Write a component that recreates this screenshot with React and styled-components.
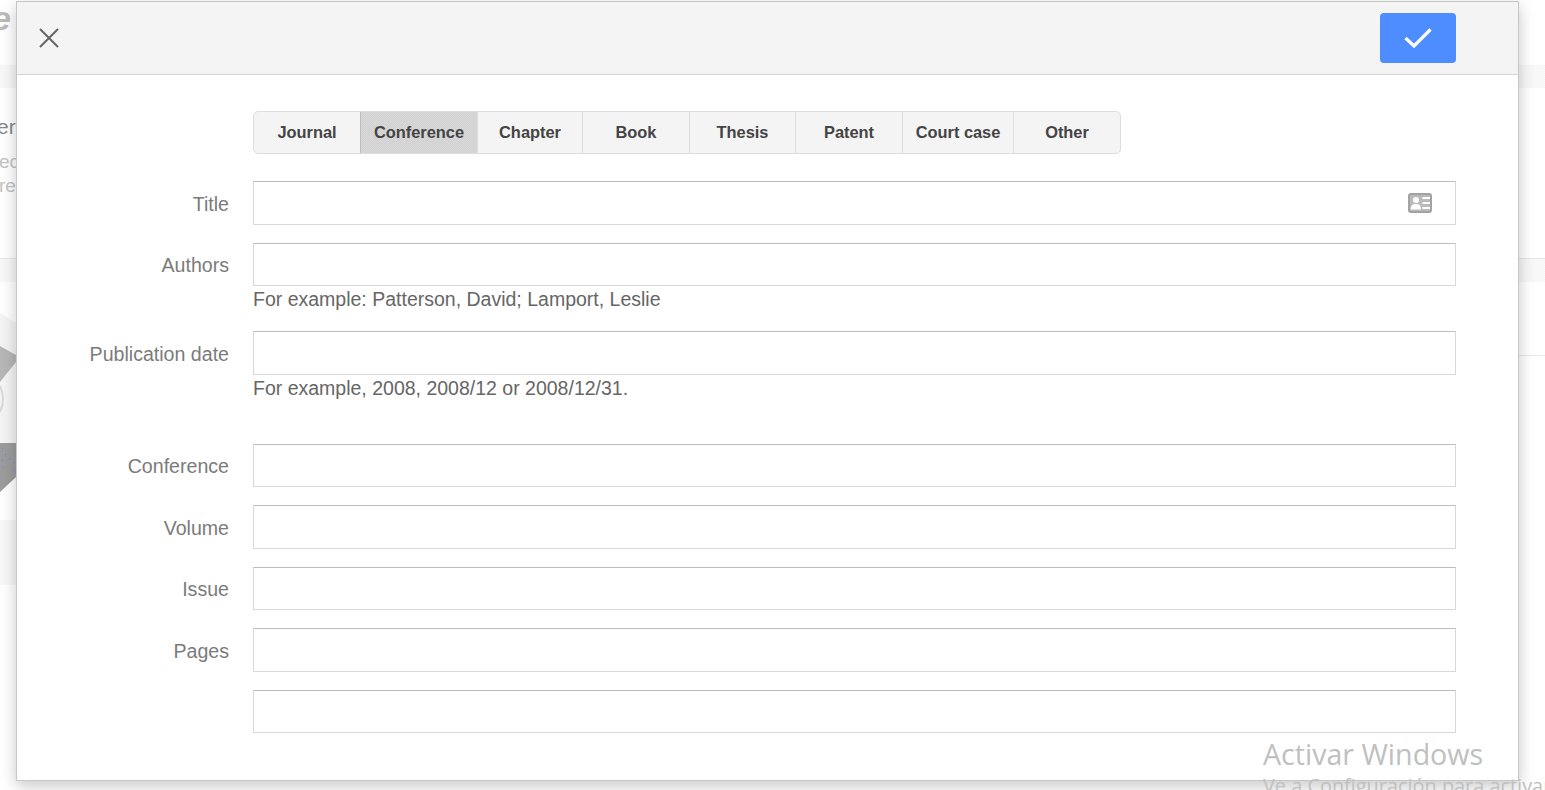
import React from "react";
import styled, { createGlobalStyle } from "styled-components";

const GlobalStyle = createGlobalStyle`
    html, body {
        margin: 0;
        height: 100%;
        overflow: hidden;
        background: #fff;
        font-family: "Liberation Sans", Arial, sans-serif;
    }
    * {
        box-sizing: border-box;
    }
`;

const tabs = [
    { name: "Journal", width: 106 },
    { name: "Conference", width: 117 },
    { name: "Chapter", width: 105 },
    { name: "Book", width: 107 },
    { name: "Thesis", width: 106 },
    { name: "Patent", width: 107 },
    { name: "Court case", width: 111 },
    { name: "Other", width: 107 },
];

const fields = [
    { label: "Title", icon: true },
    { label: "Authors", hint: "For example: Patterson, David; Lamport, Leslie" },
    { label: "Publication date", hint: "For example, 2008, 2008/12 or 2008/12/31." },
    { label: "Conference", spaced: true },
    { label: "Volume" },
    { label: "Issue" },
    { label: "Pages" },
    { label: "" },
];

const App = () => {
    return (
        <>
            <GlobalStyle />
            <Page>
                <TopBar>
                    <Logo>e</Logo>
                </TopBar>
                <Band>
                    <Card>
                        <CardTitle>er</CardTitle>
                        <CardText>ec</CardText>
                        <CardText>re</CardText>
                    </Card>
                </Band>
                <Figure>
                    <svg width="16" height="238" viewBox="0 0 16 238">
                        <path d="M0 31 L16 41 V195 L0 210 Z" fill="#f4f4f4" />
                        <path d="M0 64 L16 73 V80 L0 100 Z" fill="#b7b7b7" />
                        <path d="M0 104 Q6 117 0 130" fill="none" stroke="#d8d8d8" strokeWidth="2" />
                        <path d="M0 161 H16 V195 L0 210 Z" fill="#9c9c9c" />
                        <g fill="#4d8dff">
                            <rect x="2" y="166" width="1" height="1" />
                            <rect x="5" y="172" width="1" height="1" />
                            <rect x="2" y="178" width="1" height="1" />
                            <rect x="9" y="176" width="1" height="1" />
                            <rect x="13" y="180" width="1" height="1" />
                            <rect x="3" y="185" width="1" height="1" />
                            <rect x="14" y="188" width="1" height="1" />
                        </g>
                    </svg>
                </Figure>
                <Footer />
            </Page>

            <Modal>
                <ModalHeader>
                    <CloseButton aria-label="Close">
                        <svg width="22" height="22" viewBox="0 0 22 22" fill="none" stroke="#666" strokeWidth="2">
                            <path d="M2 2 L20 20 M20 2 L2 20" />
                        </svg>
                    </CloseButton>
                    <SaveButton aria-label="Save">
                        <svg width="28" height="22" viewBox="0 0 28 22" fill="none" stroke="#fff" strokeWidth="3.2">
                            <path d="M1.5 11 L10 19 L26.5 2.5" />
                        </svg>
                    </SaveButton>
                </ModalHeader>
                <ModalBody>
                    <Tabs>
                        {tabs.map((tab) => (
                            <Tab key={tab.name} $width={tab.width} $active={tab.name === "Conference"}>
                                {tab.name}
                            </Tab>
                        ))}
                    </Tabs>
                    <Form>
                        {fields.map((field, i) => (
                            <Row key={i} $spaced={field.spaced}>
                                <Label>{field.label}</Label>
                                <Control>
                                    <Input />
                                    {field.icon && (
                                        <CardIcon>
                                            <svg width="24" height="20" viewBox="0 0 24 20">
                                                <rect width="24" height="20" rx="3" fill="#a3a3a3" />
                                                <rect x="2" y="2" width="20" height="16" rx="1" fill="#fff" opacity="0.25" />
                                                <circle cx="8" cy="7" r="3" fill="#fff" />
                                                <path d="M2.5 16.5 C3 12 5 11 8 11 C11 11 13 12 13 16.5 Z" fill="#fff" />
                                                <path d="M14.5 5 H22 M14.5 10 H22 M14.5 15 H22" stroke="#fff" strokeWidth="2" />
                                            </svg>
                                        </CardIcon>
                                    )}
                                    {field.hint && <Hint>{field.hint}</Hint>}
                                </Control>
                            </Row>
                        ))}
                    </Form>
                </ModalBody>
            </Modal>

            <Watermark>
                <WatermarkTitle>Activar Windows</WatermarkTitle>
                <WatermarkText>Ve a Configuración para activar Windows.</WatermarkText>
            </Watermark>
        </>
    );
};

// the reference is a dithered capture, a 2px checker gets close to it
const dither = (a, b) => `conic-gradient(${a} 25%, ${b} 0 50%, ${a} 0 75%, ${b} 0) 0 0 / 2px 2px`;

const Page = styled.div`
    display: flex;
    flex-direction: column;
    height: 790px;
`;
const TopBar = styled.div`
    height: 65px;
    background: #fff;
`;
const Logo = styled.div`
    margin-left: -8px;
    padding-top: 1px;
    font-size: 34px;
    line-height: 34px;
    font-weight: bold;
    font-style: italic;
    color: #bcbcbc;
`;
const Band = styled.div`
    height: 217px;
    padding-top: 23px;
    background: ${dither("#fafafa", "#f6f6f6")};
`;
const Card = styled.div`
    height: 171px;
    padding-top: 26px;
    background: #fff;
    border-bottom: 1px solid #e6e6e6;
    overflow: hidden;
`;
const CardTitle = styled.div`
    margin-left: -3px;
    margin-bottom: 10px;
    font-size: 21px;
    line-height: 26px;
    color: #8a8a8a;
`;
const CardText = styled.div`
    margin-left: -1px;
    font-size: 19px;
    line-height: 24px;
    color: #c4c4c4;
`;
const Figure = styled.div`
    height: 238px;
    line-height: 0;
    background: linear-gradient(#fff 73px, #e9e9e9 73px, #e9e9e9 74px, #fff 74px);
`;
const Footer = styled.div`
    height: 65px;
    width: 16px;
    background: ${dither("#fafafa", "#f6f6f6")};
`;

const Modal = styled.div`
    position: absolute;
    left: 16px;
    top: 1px;
    width: 1503px;
    height: 780px;
    background: #fff;
    border: 1px solid #c6c6c6;
    box-shadow: 0 5px 15px rgba(0, 0, 0, 0.22);
`;
const ModalHeader = styled.div`
    display: flex;
    align-items: center;
    justify-content: space-between;
    height: 73px;
    padding: 0 62px 0 21px;
    background: ${dither("#f6f6f6", "#f2f2f2")};
    border-bottom: 1px solid #d4d4d4;
`;
const CloseButton = styled.button`
    display: flex;
    padding: 0;
    border: 0;
    background: none;
`;
const SaveButton = styled.button`
    display: flex;
    align-items: center;
    justify-content: center;
    width: 76px;
    height: 50px;
    padding: 0;
    border: 0;
    border-radius: 4px;
    background: #4d8dff;
`;
const ModalBody = styled.div`
    padding: 36px 62px 0 0;
`;
const Tabs = styled.div`
    display: flex;
    width: 868px;
    height: 43px;
    margin-left: 236px;
    margin-bottom: 27.25px;
    background: ${dither("#f6f6f6", "#f2f2f2")};
    border: 1px solid #ddd;
    border-radius: 5px;
    overflow: hidden;
`;
const Tab = styled.div`
    width: ${(props) => props.$width}px;
    display: flex;
    align-items: center;
    justify-content: center;
    font-size: 16.4px;
    font-weight: bold;
    color: #444;
    background: ${(props) => (props.$active ? dither("#d8d8d8", "#d2d2d2") : "transparent")};
    border-left: 1px solid ${(props) => (props.$active ? "#bdbdbd" : "#ddd")};

    &:first-child {
        border-left: 0;
    }
`;
const Form = styled.div`
    display: flex;
    flex-direction: column;
    gap: 18px;
`;
const Row = styled.div`
    display: grid;
    grid-template-columns: 212px 1fr;
    column-gap: 24px;
    margin-top: ${(props) => (props.$spaced ? "24px" : "0")};
`;
const Label = styled.div`
    height: 43.5px;
    padding-top: 10.5px;
    font-size: 19.6px;
    line-height: 24px;
    text-align: right;
    color: #7b7b7b;
`;
const Control = styled.div`
    position: relative;
`;
const Input = styled.input`
    display: block;
    width: 100%;
    height: 43.5px;
    padding: 0 12px;
    background: #fff;
    border: 1px solid #d8d8d8;
    border-top-color: #bdbdbd;
    border-radius: 0;
    outline: none;
`;
const CardIcon = styled.span`
    position: absolute;
    top: 12px;
    right: 24px;
    display: flex;
`;
const Hint = styled.div`
    height: 27px;
    font-size: 19.5px;
    line-height: 26px;
    color: #666;
`;

const Watermark = styled.div`
    position: absolute;
    left: 1263px;
    top: 735px;
    width: 282px;
    height: 55px;
    overflow: hidden;
    white-space: nowrap;
    font-family: "Open Sans", "Noto Sans", sans-serif;
    color: #c0c0c0;
    pointer-events: none;
`;
const WatermarkTitle = styled.div`
    font-size: 28.6px;
    line-height: 38px;
`;
const WatermarkText = styled.div`
    font-size: 19.9px;
    line-height: 26px;
`;

export default App;
